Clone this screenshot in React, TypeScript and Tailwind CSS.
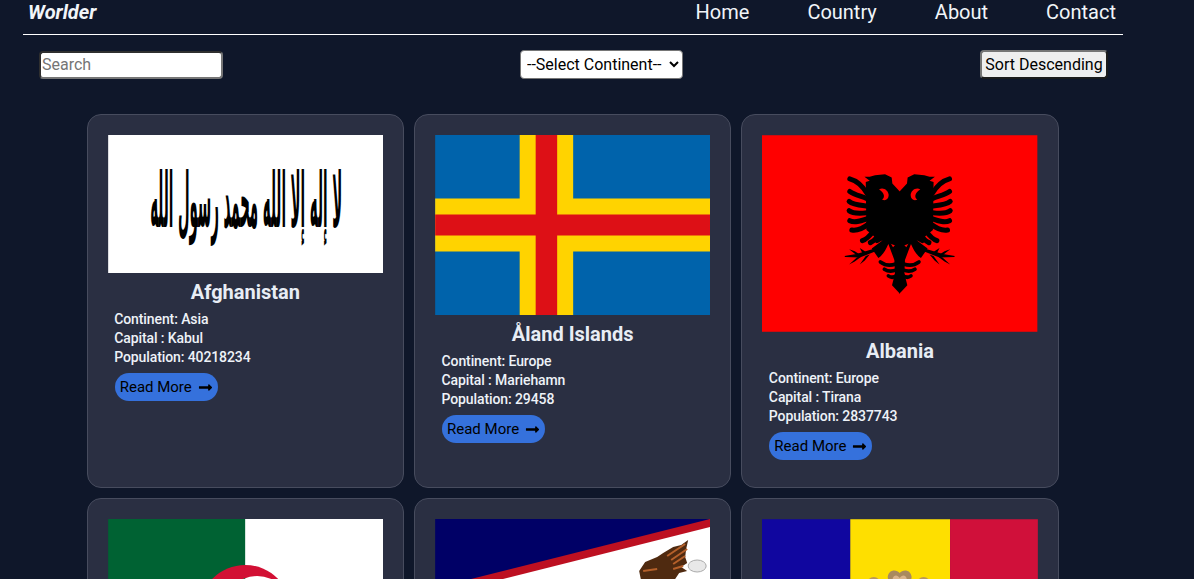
import { ReactNode } from "react";
import { FaLongArrowAltRight } from "react-icons/fa";

function AfghanistanFlag() {
  return (
    <svg className="block w-full h-[138px]" viewBox="0 0 275 138">
      <rect width="275" height="138" fill="#fff" />
      <g transform="translate(0 -92) scale(1 1.9)">
        <text
          x="138"
          y="97"
          direction="rtl"
          textAnchor="middle"
          textLength="192"
          lengthAdjust="spacingAndGlyphs"
          fontFamily="'DejaVu Sans', sans-serif"
          fontWeight="700"
          fontSize="40"
        >
          لا إله إلا الله محمد رسول الله
        </text>
      </g>
    </svg>
  );
}

function AlandFlag() {
  return (
    <svg className="block w-full h-[180px]" viewBox="0 0 275 180">
      <rect width="275" height="180" fill="#0063ab" />
      <rect x="84.5" width="53.5" height="180" fill="#ffd300" />
      <rect y="63.5" width="275" height="53" fill="#ffd300" />
      <rect x="100.5" width="21.5" height="180" fill="#dd1016" />
      <rect y="79.5" width="275" height="21" fill="#dd1016" />
    </svg>
  );
}

function AlbaniaFlag() {
  const half = (
    <g>
      <path d="M241 95 L218 70 L216 52 L196 42 L166 45 L150 50 L134 50 L150 62 L138 66 L140 210 L172 236 L241 262 Z" />
      <path d="M178 88 C190 80 206 90 207 105 C207 118 196 124 187 118 C199 110 191 96 178 88 Z" fill="#f00" />
      <g fill="none" stroke="#000" strokeWidth="15" strokeLinecap="round">
        <path d="M90 56 C105 60 125 72 142 100" />
        <path d="M90 94 C105 105 125 108 142 116" />
        <path d="M88 124 C100 135 125 136 142 138" />
        <path d="M88 152 C100 162 125 160 142 158" />
        <path d="M90 182 C105 190 125 182 142 176" />
        <path d="M96 210 C110 212 130 205 146 192" />
        <path d="M128 242 C140 238 150 228 160 214" />
        <path d="M152 248 C165 242 172 232 178 222" />
        <path d="M172 242 C180 238 190 230 196 224" />
      </g>
      <path d="M156 266 L190 240 L212 248 L220 262 L241 240 L241 345 L226 345 L224 300 L206 252 C198 270 190 285 176 294 Z" />
      <path d="M241 402 L217 376 L226 340 L241 340 Z" />
      <g fill="none" stroke="#000" strokeWidth="11" strokeLinecap="round">
        <path d="M182 306 C198 318 212 318 228 312" />
        <path d="M194 328 C206 336 216 336 230 330" />
        <path d="M206 348 C214 354 222 354 232 346" />
      </g>
      <path d="M74 288 L110 282 L165 266 L168 274 L120 293 L76 291 Z" />
      <path d="M88 268 L105 274 L118 282 L108 284 Z M88 314 L105 305 L125 290 L112 292 Z M120 264 L132 272 L140 278 L128 280 Z M120 314 L135 302 L150 284 L138 288 Z" />
    </g>
  );
  return (
    <svg className="block w-full h-[197px]" viewBox="0 0 276 197">
      <rect width="276" height="197" fill="#f00" />
      <g transform="translate(58 25) scale(0.3333)">
        {half}
        <g transform="translate(480 0) scale(-1 1)">{half}</g>
      </g>
    </svg>
  );
}

function AlgeriaFlag() {
  return (
    <svg className="block w-full h-[183px]" viewBox="0 0 275 183">
      <rect width="138" height="183" fill="#006233" />
      <rect x="137" width="138" height="183" fill="#fff" />
      <circle cx="137" cy="92" r="46" fill="#d21034" />
      <circle cx="149" cy="92" r="35" fill="#fff" />
      <path d="M137 59.1 A35 35 0 0 0 137 124.9 Z" fill="#006233" />
    </svg>
  );
}

function SamoaFlag() {
  return (
    <svg className="block w-full h-[137px]" viewBox="0 0 275 137">
      <rect width="275" height="137" fill="#006" />
      <path d="M275 0 L0 69 L275 137 Z" fill="#bd1021" />
      <path d="M275 8 L32 69 L275 129 Z" fill="#fff" />
      <ellipse cx="262" cy="47" rx="9" ry="6" fill="#e8e8e8" stroke="#aaa" strokeWidth="1" />
      <path
        d="M253 21 L251 30 L250 38 L252 44 L246 48 L252 52 L244 54 L240 60 L226 62 L206 62 L204 52 L210 43 L222 38 L228 34 L238 28 L246 26 Z"
        fill="#4f2a10"
      />
      <path d="M250 25 L232 37 M252 30 L236 41 M250 37 L238 45 M248 47 L238 50 M208 52 L222 50" stroke="#b5602a" strokeWidth="2" />
    </svg>
  );
}

function AndorraFlag() {
  return (
    <svg className="block w-full h-[193px]" viewBox="0 0 276 193">
      <rect width="89" height="193" fill="#10069f" />
      <rect x="88.5" width="100" height="193" fill="#fedf00" />
      <rect x="188.5" width="88" height="193" fill="#d0103a" />
      <path d="M126 58 C127 50 135 50 138 54 C141 50 149 50 150 58 L146 80 L130 80 Z" fill="#a98a5e" />
      <path d="M131 59 C133 55 136 56 138 59 C140 56 143 55 145 59 L142 80 L134 80 Z" fill="#d9b48a" />
      <circle cx="112" cy="65" r="7" fill="#b9975b" />
      <circle cx="162" cy="65" r="7" fill="#b9975b" />
    </svg>
  );
}

interface Country {
  name: string;
  continent: string;
  capital: string;
  population: number;
  flag: ReactNode;
}

const countries: Country[] = [
  { name: "Afghanistan", continent: "Asia", capital: "Kabul", population: 40218234, flag: <AfghanistanFlag /> },
  { name: "Åland Islands", continent: "Europe", capital: "Mariehamn", population: 29458, flag: <AlandFlag /> },
  { name: "Albania", continent: "Europe", capital: "Tirana", population: 2837743, flag: <AlbaniaFlag /> },
  { name: "Algeria", continent: "Africa", capital: "Algiers", population: 44700000, flag: <AlgeriaFlag /> },
  { name: "American Samoa", continent: "Oceania", capital: "Pago Pago", population: 55197, flag: <SamoaFlag /> },
  { name: "Andorra", continent: "Europe", capital: "Andorra la Vella", population: 77265, flag: <AndorraFlag /> },
];

function CountryCard({ country }: { country: Country }) {
  return (
    <div className="bg-[#2a2f42] border border-[#474c5e] rounded-[14px] px-5 pt-5 pb-[27px]">
      {country.flag}
      <h2 className="mt-[5px] text-center text-xl leading-7 font-bold text-[#e8edf5]">{country.name}</h2>
      <div className="mt-[4px] px-[6.5px] text-sm leading-[19px] font-medium tracking-[-0.1px] text-[#eef2f8]">
        <p>Continent: {country.continent}</p>
        <p>Capital : {country.capital}</p>
        <p>Population: {country.population}</p>
        <button className="mt-[6px] ml-[0.5px] flex items-center gap-[6px] h-7 px-[5px] rounded-full bg-[#3571dc] text-black text-[15px] font-normal tracking-normal">
          Read More <FaLongArrowAltRight className="w-[15px] h-[15px]" />
        </button>
      </div>
    </div>
  );
}

export default function App() {
  return (
    <div className="h-screen overflow-hidden bg-[#0f172a] font-['Roboto',sans-serif]">
      <header className="ml-[23px] w-[1100px] h-[35px] pl-[5px] pr-[7px] border-b border-white flex justify-between items-center text-[#f1f5f9]">
        <span className="text-xl font-bold italic mb-[10px]">Worlder</span>
        <nav className="flex gap-[58px] text-xl mb-[11px]">
          <a>Home</a>
          <a>Country</a>
          <a>About</a>
          <a>Contact</a>
        </nav>
      </header>
      <div className="ml-[39px] w-[1069px] mt-[15px] h-[29px] flex justify-between items-center text-base">
        <input
          placeholder="Search"
          className="w-[184px] h-[28px] px-[1px] bg-white text-black rounded-[4px] border-2 border-t-[#2f2f2f] border-l-[#2f2f2f] border-r-[#767676] border-b-[#767676] placeholder:text-[#757575]"
        />
        <select className="w-[163px] h-[29px] bg-white text-black rounded-[4px] border border-[#767676] pl-[2px]">
          <option>--Select Continent--</option>
          <option>Asia</option>
          <option>Europe</option>
          <option>Africa</option>
        </select>
        <button className="w-[128px] h-[29px] bg-[#efefef] text-black rounded-[4px] border-2 border-t-[#767676] border-l-[#767676] border-r-[#1c1c1c] border-b-[#1c1c1c]">
          Sort Descending
        </button>
      </div>
      <main className="ml-[86.7px] w-[972px] mt-[35px] grid grid-cols-3 gap-[10px]">
        {countries.map((c) => (
          <CountryCard key={c.name} country={c} />
        ))}
      </main>
    </div>
  );
}
